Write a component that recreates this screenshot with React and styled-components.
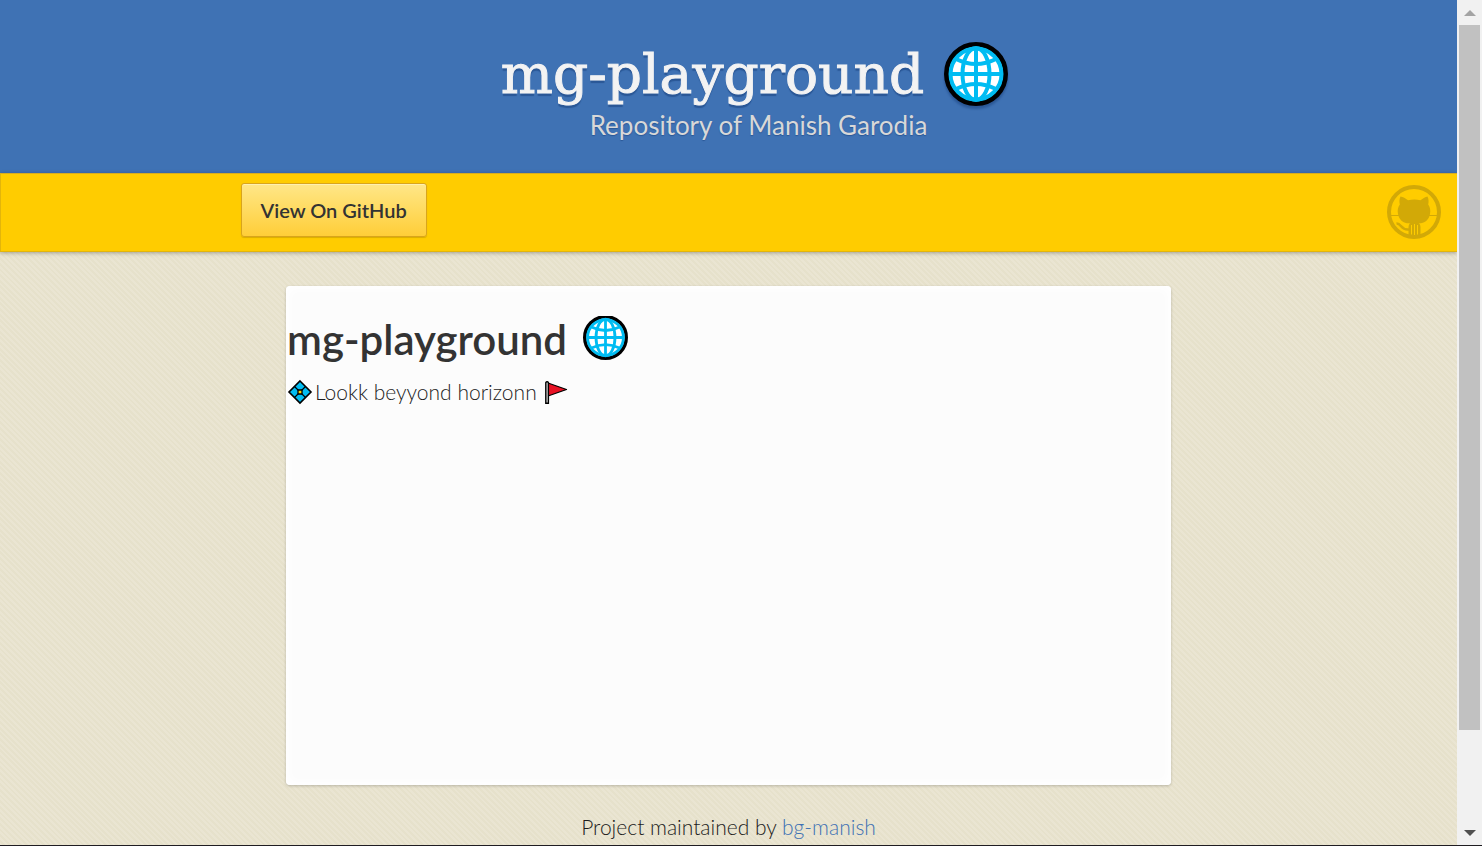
import React from "react";
import styled, { createGlobalStyle } from "styled-components";

const sans = `Lato, "Open Sans", "Liberation Sans", sans-serif`;

const GlobalStyle = createGlobalStyle`
  *, *::before, *::after { box-sizing: border-box; }
  body { margin: 0; background: #e8e3cd; color: #1c1c1c; font: 300 21px/30px ${sans}; }
  h1, h2, h3, p { margin: 0; }
`;

const Shell = styled.div`
  display: flex;
  height: 100vh;
  overflow: hidden;
  border-bottom: 1px solid #1f1d22;
`;

const Page = styled.div`
  flex: 1;
  min-width: 0;
  overflow: hidden;
  background: repeating-linear-gradient(45deg, #eae5d2 0 2px, #e6e1cb 2px 4px);
`;

const Header = styled.header`
  height: 173px;
  padding: 42px 0 0 60px;
  background: #3f72b4;
  display: flex;
  flex-direction: column;
  align-items: center;
`;

const Title = styled.h1`
  display: flex;
  align-items: center;
  gap: 20px;
  height: 64px;
  padding-right: 8px;
  color: #f3f3f3;
  font: 400 55px/66px "DejaVu Serif", serif;
  -webkit-text-stroke: 1px #f3f3f3;
  text-shadow: 0 3px 1px #2a5796;
  svg { filter: drop-shadow(0 3px 1px #2a5796); }
`;

const Subtitle = styled.p`
  color: #d8d8d8;
  font: 400 26px/38px ${sans};
  text-shadow: 0 1px 1px #2a5796;
`;

const Bar = styled.nav`
  position: relative;
  height: 79px;
  padding: 9px 16px 0 14px;
  display: grid;
  grid-template-columns: 1fr minmax(0, 975px) 1fr;
  align-items: start;
  background: #ffcc00;
  border: 1px solid #e3b50a;
  border-top-color: #d8ad20;
  border-right: 0;
  box-shadow: 0 1px 4px rgba(0, 0, 0, 0.3);
`;

const BarButton = styled.a`
  grid-column: 2;
  justify-self: start;
  padding: 0 19px;
  border: 1px solid #d9a51c;
  border-radius: 3px;
  background: linear-gradient(#ffe788, #ffce38);
  box-shadow: inset 0 1px 0 #fff0b0, 0 1px 1px rgba(0, 0, 0, 0.15);
  color: #333;
  font: 600 20px/52px ${sans};
  text-decoration: none;
`;

const CatLink = styled.a`
  justify-self: end;
  height: 54px;
  margin-top: 2px;
  color: #d2a907;
`;

const Card = styled.main`
  width: 885px;
  max-width: 100%;
  min-height: 499px;
  margin: 34px auto 0;
  padding: 30px 1px;
  border-radius: 4px;
  background: #fcfcfc;
  box-shadow: inset 0 0 10px 3px #fff, 0 1px 3px rgba(0, 0, 0, 0.2);
`;

const CardTitle = styled.h2`
  display: flex;
  align-items: center;
  gap: 16px;
  color: #333;
  font: 600 42px/40px ${sans};
`;

const Tagline = styled.p`
  display: flex;
  align-items: center;
  gap: 2px;
  margin-top: 16px;
`;

const Flag = styled.span`
  display: flex;
  margin-left: 5px;
`;

const Footer = styled.footer`
  padding-top: 27px;
  text-align: center;
  a { color: #3f72b4; text-decoration: none; }
`;

const Track = styled.div`
  flex: none;
  width: 25px;
  display: flex;
  flex-direction: column;
  padding: 0 2px;
  background: #f1f1f1;
`;

const Arrow = styled.div`
  flex: none;
  height: 25px;
  display: flex;
  align-items: center;
  justify-content: center;
  color: ${(p) => (p.$muted ? "#a3a3a3" : "#505050")};
`;

const Thumb = styled.div`
  flex: 705;
  background: #c1c1c1;
`;

const Gap = styled.div`
  flex: 90;
`;

function Globe({ size, clipped }) {
  return (
    <svg width={size} height={size} viewBox={clipped ? "0 1.4 64 64" : "0 0 64 64"} aria-hidden="true">
      <circle cx="32" cy="32" r="29.5" fill="#fff" stroke="#000" strokeWidth="5" />
      <g fill="none" stroke="#00bcf2" strokeWidth="4">
        <circle cx="32" cy="32" r="25.5" />
        <path d="M32 6v52M6 32h52" />
        <ellipse cx="32" cy="32" rx="13.5" ry="26" />
        <path d="M12 17q20 10 40 0M12 47q20 -10 40 0" />
      </g>
    </svg>
  );
}

function Diamond() {
  return (
    <svg width="26" height="26" viewBox="0 0 26 26" aria-hidden="true">
      <path d="M13 2 24 13 13 24 2 13Z" fill="#00bcf2" stroke="#000" strokeWidth="1.6" />
      <path d="M7.500 7.500l11 11M18.500 7.500l-11 11" stroke="#000" strokeWidth="1.2" />
      <path d="M11 11h4v4h-4z" fill="#ffd400" stroke="#000" strokeWidth="1.300" />
    </svg>
  );
}

function RedFlag() {
  return (
    <svg width="24" height="26" viewBox="0 0 24 26" aria-hidden="true">
      <path d="M4 4 22.500 10.500 4 17Z" fill="#e81224" stroke="#000" strokeWidth="1.300" strokeLinejoin="round" />
      <path d="M1.800 3.500a1.500 1.500 0 0 1 2.600 0V24.300H1.800Z" fill="#ddd" stroke="#000" strokeWidth="1.400" />
    </svg>
  );
}

function Octocat() {
  return (
    <svg width="54" height="54" viewBox="0 0 54 54" aria-hidden="true">
      <circle cx="27" cy="27" r="25" fill="none" stroke="currentColor" strokeWidth="4" />
      <g fill="currentColor">
        <path d="M13.500 11.500C16 11.800 18.500 13.500 21 15.200C25 14.200 29.500 14.200 33.500 15.200C36 13.500 38.500 11.800 40.500 11.500C41.800 14.200 41.800 17 41.200 19.500C43 22 43.800 25 43 29C42 35 37.500 38.300 32 38.300H22C16.500 38.300 12 35 11 29C10.200 25 11 22 12.800 19.500C12.200 17 12.200 14.200 13.500 11.500Z" />
        <path d="M24 37.500H31C33 38.500 33.500 40.500 33.500 42.500V52H21.500V42.500C21.500 40.500 22 38.500 24 37.500Z" />
      </g>
      <path d="M9.500 38.500C14.500 38 13.500 45.500 22 44.500" fill="none" stroke="currentColor" strokeWidth="2.600" />
      <path d="M24.500 40v9.500M27.500 39v11M30.500 40v9.500" stroke="#ffcc00" strokeWidth="1" />
      <path d="M4 30.500h8M42 30.500h8" stroke="currentColor" strokeWidth="1" />
    </svg>
  );
}

function Triangle({ down }) {
  return (
    <svg width="12" height="6" viewBox="0 0 12 6" aria-hidden="true">
      <path d={down ? "M0 0h12L6 6Z" : "M0 6h12L6 0Z"} fill="currentColor" />
    </svg>
  );
}

export default function App() {
  return (
    <>
      <GlobalStyle />
      <Shell>
        <Page>
          <Header>
            <Title>mg-playground <Globe size={64} /></Title>
            <Subtitle>Repository of Manish Garodia</Subtitle>
          </Header>
          <Bar>
            <BarButton href="#github">View On GitHub</BarButton>
            <CatLink href="#github" aria-label="GitHub"><Octocat /></CatLink>
          </Bar>
          <Card>
            <CardTitle>mg-playground <Globe size={45} clipped /></CardTitle>
            <Tagline>
              <Diamond />
              Lookk beyyond horizonn
              <Flag><RedFlag /></Flag>
            </Tagline>
          </Card>
          <Footer>
            Project maintained by <a href="#maintainer">bg-manish</a>
          </Footer>
        </Page>
        <Track aria-hidden="true">
          <Arrow $muted><Triangle /></Arrow>
          <Thumb />
          <Gap />
          <Arrow><Triangle down /></Arrow>
        </Track>
      </Shell>
    </>
  );
}
